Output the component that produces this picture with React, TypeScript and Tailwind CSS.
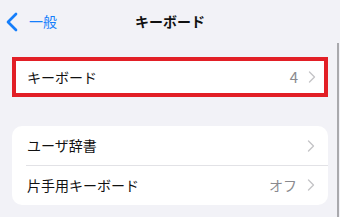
import { ChevronLeft, ChevronRight } from 'lucide-react';

const font = { fontFamily: '"Noto Sans CJK JP", "Noto Sans", sans-serif' };

function Row({ label, value, divider }: { label: string; value?: string; divider?: boolean }) {
  return (
    <div className="relative flex h-[39.5px] items-center pl-[15px] pr-[7px]">
      <span className="flex-1 text-[14px] text-[#111111]">{label}</span>
      {value && <span className="mr-[4px] text-[14px] text-[#8a8a8e]">{value}</span>}
      <ChevronRight size={20} strokeWidth={1.6} className="text-[#c4c4c7]" />
      {divider && <div className="absolute bottom-0 left-[14px] right-0 h-px bg-[#e2e2e6]" />}
    </div>
  );
}

export default function App() {
  return (
    <div className="relative h-[217px] w-[340px] overflow-hidden bg-[#f2f2f7]" style={font}>
      <div className="relative flex h-[43px] items-center">
        <div className="flex items-center text-[#157efb]">
          <ChevronLeft size={32} strokeWidth={2} className="-ml-[4px]" />
          <span className="ml-[1px] text-[14px]">一般</span>
        </div>
        <div className="absolute left-0 right-0 top-0 flex h-[43px] items-center justify-center">
          <span className="text-[14px] font-bold text-[#111111]">キーボード</span>
        </div>
      </div>

      <div className="mx-[12px] mt-[14px] h-[40px] border-4 border-[#e21f26] bg-white">
        <div className="flex h-full items-center pl-[11px] pr-[2px]">
          <span className="flex-1 text-[14px] text-[#111111]">キーボード</span>
          <span className="mr-[4px] text-[15px] text-[#8a8a8e]">4</span>
          <ChevronRight size={20} strokeWidth={1.6} className="text-[#c4c4c7]" />
        </div>
      </div>

      <div className="mx-[12px] mt-[29px] overflow-hidden rounded-[10px] bg-white">
        <Row label="ユーザ辞書" divider />
        <Row label="片手用キーボード" value="オフ" />
      </div>

      <div className="absolute bottom-0 right-[1px] top-[43px] w-[2px] bg-[#a9a9ad]" />
    </div>
  );
}
